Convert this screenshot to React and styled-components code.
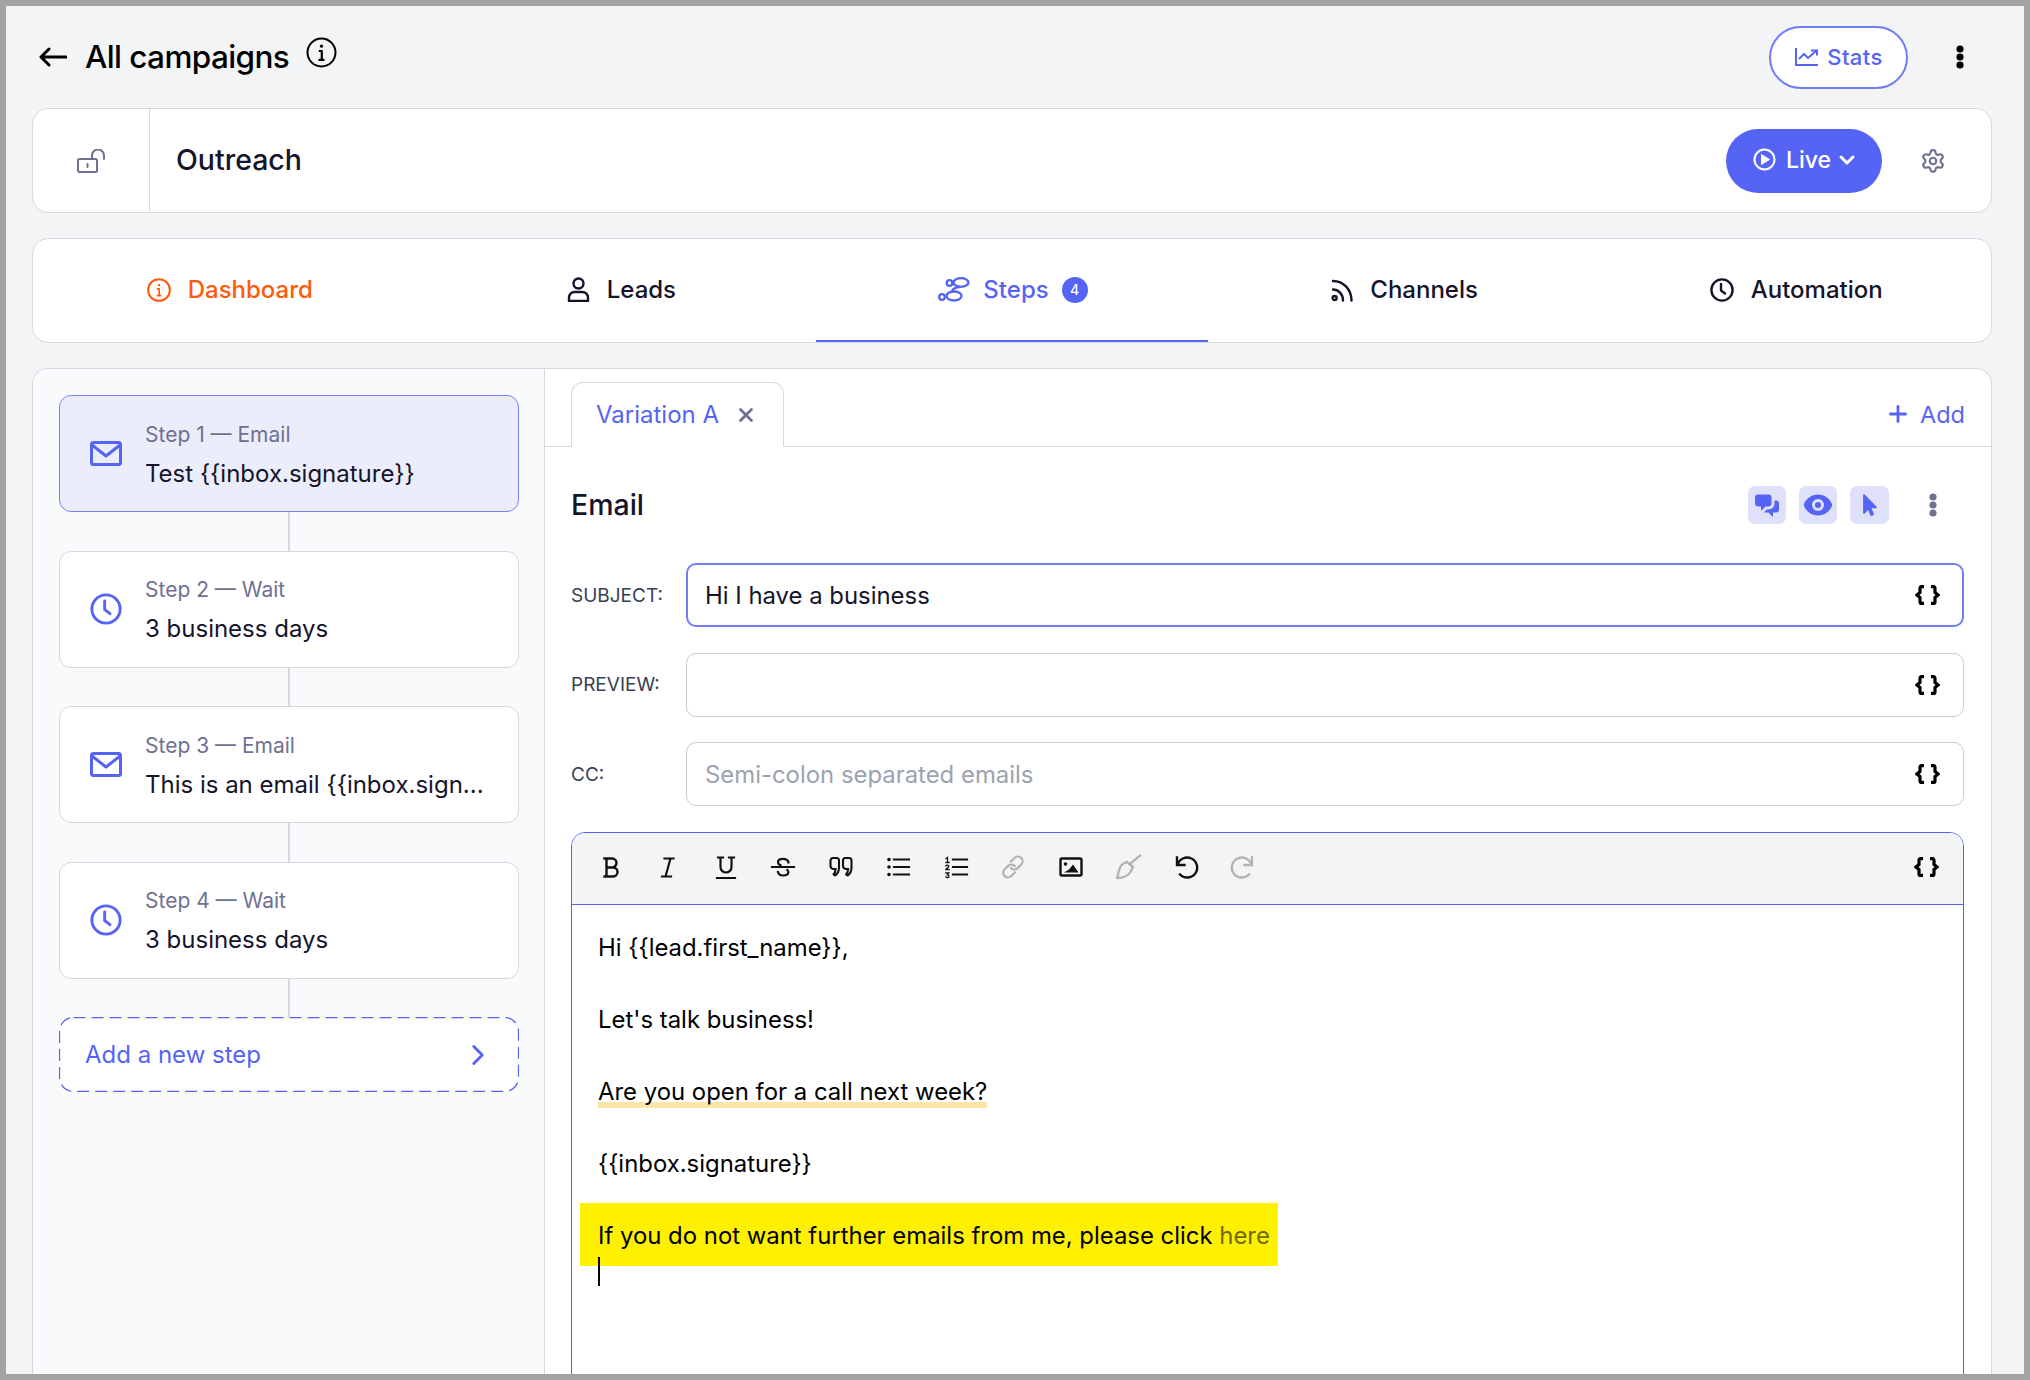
import React from "react";
import styled, { createGlobalStyle } from "styled-components";
import { Settings, ChevronDown, ChevronRight, X, Plus } from "lucide-react";
import { HiChatAlt2, HiEye } from "react-icons/hi";
import { FaMousePointer } from "react-icons/fa";

const PRIMARY = "#5664f5";
const EDGE = "#717df7";
const INK = "#14142b";
const MUTED = "#6e7191";
const LINE = "#d6d8e0";

const Global = createGlobalStyle`
  html, body { margin: 0; padding: 0; height: 1380px; overflow: hidden; background: #a3a3a3; }
  body { font-family: Inter, "Liberation Sans", sans-serif; }
  * { box-sizing: border-box; }
`;

const Frame = styled.div`
  margin: 6px;
  height: 1368px;
  background: #f3f4f6;
  overflow: hidden;
  padding: 0 32px 0 26px;
  display: flex;
  flex-direction: column;
`;
const Header = styled.header`
  height: 102px;
  flex: none;
  display: flex;
  align-items: center;
`;
const BackLink = styled.a`
  display: flex;
  align-items: center;
  color: #000;
  font-size: 31.5px;
  font-weight: 500;
  letter-spacing: -0.6px;
  gap: 18px;
  margin-left: 7px;
  padding-bottom: 1px;
`;
const InfoWrap = styled.span`
  display: flex;
  margin-left: 17px;
  margin-top: -9px;
`;
const HeaderRight = styled.div`
  margin-left: auto;
  display: flex;
  align-items: center;
  gap: 48px;
  margin-right: 28px;
`;
const StatsButton = styled.button`
  width: 139px;
  height: 63px;
  border-radius: 32px;
  border: 2px solid ${EDGE};
  background: #fff;
  color: ${PRIMARY};
  font: 500 22px Inter, sans-serif;
  letter-spacing: 0.4px;
  display: flex;
  align-items: center;
  justify-content: center;
  gap: 9px;
  padding: 0 0 0 1px;
`;
const Card = styled.section`
  background: #fff;
  border: 1px solid ${LINE};
  border-radius: 16px;
  flex: none;
`;
const NameCard = styled(Card)`
  height: 105px;
  display: flex;
  align-items: center;
`;
const LockCell = styled.div`
  width: 117px;
  height: 100%;
  border-right: 1px solid ${LINE};
  display: flex;
  align-items: center;
  justify-content: center;
`;
const CampaignName = styled.h1`
  margin: 0 0 0 26px;
  padding-bottom: 2px;
  font-size: 28.5px;
  font-weight: 500;
  color: ${INK};
`;
const LiveButton = styled.button`
  margin-left: auto;
  width: 156px;
  height: 64px;
  border-radius: 32px;
  border: 0;
  background: ${PRIMARY};
  color: #fff;
  font: 500 23px Inter, sans-serif;
  display: flex;
  align-items: center;
  justify-content: center;
  gap: 10px;
  padding: 0 0 2px;
`;
const LiveChevron = styled(ChevronDown)`
  margin: 0 -4px 0 -6px;
`;
const GearWrap = styled.span`
  display: flex;
  margin: 0 45px 0 38px;
  color: ${MUTED};
`;
const TabsCard = styled(Card)`
  height: 105px;
  margin-top: 25px;
  display: grid;
  grid-template-columns: repeat(5, 1fr);
  overflow: hidden;
`;
const Tab = styled.div`
  display: flex;
  align-items: center;
  justify-content: center;
  gap: ${(p) => p.$gap || 17}px;
  font-size: 24px;
  font-weight: 500;
  padding: 0 0 2px 2px;
  color: ${(p) => p.$color || INK};
  box-shadow: ${(p) => (p.$active ? `inset 0 -2px 0 ${PRIMARY}` : "none")};
`;
const Badge = styled.span`
  width: 26px;
  height: 26px;
  border-radius: 50%;
  background: ${PRIMARY};
  color: #fff;
  font-size: 14px;
  font-weight: 500;
  display: flex;
  align-items: center;
  justify-content: center;
`;
const Panel = styled(Card)`
  flex: 1;
  margin-top: 25px;
  border-bottom: 0;
  border-radius: 16px 16px 0 0;
  display: grid;
  grid-template-columns: 512px 1fr;
  overflow: hidden;
`;
const Sidebar = styled.aside`
  background: #f9fafb;
  border-right: 1px solid ${LINE};
  padding: 26px 25px 0 26px;
  display: flex;
  flex-direction: column;
`;
const StepCard = styled.div`
  height: 117px;
  flex: none;
  display: flex;
  align-items: center;
  padding-left: 30px;
  gap: 23px;
  border-radius: 12px;
  border: 1px solid ${(p) => (p.$active ? "#7682f3" : LINE)};
  background: ${(p) => (p.$active ? "#ecedfb" : "#fff")};
  color: ${PRIMARY};
`;
const StepText = styled.div`
  display: flex;
  flex-direction: column;
  gap: 9px;
  min-width: 0;
  margin-top: 1px;
`;
const StepLabel = styled.span`
  font-size: 21px;
  line-height: 30px;
  color: ${MUTED};
`;
const StepTitle = styled.span`
  font-size: 24px;
  line-height: 30px;
  color: ${INK};
  white-space: nowrap;
`;
const Connector = styled.div`
  width: 2px;
  height: 38.6px;
  flex: none;
  background: ${LINE};
  align-self: center;
`;
const AddStep = styled.div`
  position: relative;
  height: 75px;
  flex: none;
  border-radius: 14px;
  background: #fff;
  display: flex;
  align-items: center;
  justify-content: space-between;
  padding: 0 24px 0 26px;
  color: ${PRIMARY};
  font-size: 24px;
`;
const DashedEdge = styled.svg`
  position: absolute;
  inset: 0;
  width: 100%;
  height: 100%;
  pointer-events: none;
`;
const Main = styled.main`
  display: flex;
  flex-direction: column;
  min-width: 0;
`;
const VariationBar = styled.div`
  height: 78px;
  flex: none;
  border-bottom: 1px solid ${LINE};
  display: flex;
  align-items: flex-end;
  padding: 0 26px;
`;
const VariationTab = styled.div`
  width: 213px;
  height: 65px;
  margin-bottom: -1px;
  background: #fff;
  border: 1px solid ${LINE};
  border-bottom-color: #fff;
  border-radius: 12px 12px 0 0;
  display: flex;
  align-items: center;
  padding: 0 0 0 24px;
  gap: 16px;
  color: ${PRIMARY};
  font-size: 24px;
`;
const CloseMark = styled.span`
  display: flex;
  color: ${MUTED};
`;
const AddVariation = styled.div`
  margin-left: auto;
  height: 64px;
  display: flex;
  align-items: center;
  gap: 9px;
  color: ${PRIMARY};
  font-size: 23.5px;
`;
const Content = styled.div`
  padding: 38px 27px 0 26px;
  display: flex;
  flex-direction: column;
`;
const EmailRow = styled.div`
  display: flex;
  align-items: center;
  height: 39px;
  margin-bottom: 39px;
`;
const EmailTitle = styled.h2`
  margin: 0;
  font-size: 28.5px;
  font-weight: 500;
  color: ${INK};
`;
const Tools = styled.div`
  margin-left: auto;
  display: flex;
  align-items: center;
  gap: 13px;
  margin-right: 27px;
`;
const ToolButton = styled.span`
  width: ${(p) => p.$w || 38}px;
  height: 38px;
  border-radius: 7px;
  background: #dfe1fb;
  color: ${PRIMARY};
  display: flex;
  align-items: center;
  justify-content: center;
`;
const DotsWrap = styled.span`
  display: flex;
  margin-left: 27px;
`;
const FieldRow = styled.div`
  display: flex;
  align-items: center;
  height: 64px;
  margin-bottom: 25.5px;
`;
const FieldLabel = styled.label`
  width: 115px;
  flex: none;
  font-size: 19px;
  color: #374151;
`;
const FieldBox = styled.div`
  flex: 1;
  height: 100%;
  border-radius: 10px;
  background: #fff;
  border: ${(p) => (p.$focus ? `2px solid ${EDGE}` : "1px solid #c9ccd6")};
  display: flex;
  align-items: center;
  padding: 0 ${(p) => (p.$focus ? 22 : 23)}px 0 ${(p) => (p.$focus ? 17 : 18)}px;
  font-size: 23.9px;
  color: ${(p) => (p.$placeholder ? "#9ca3af" : INK)};
`;
const BraceSlot = styled.span`
  margin-left: auto;
  display: flex;
`;
const Editor = styled.div`
  height: 700px;
  flex: none;
  border: 1px solid ${PRIMARY};
  border-radius: 14px 14px 0 0;
  overflow: hidden;
`;
const Toolbar = styled.div`
  height: 72px;
  background: #f3f4f6;
  border-bottom: 1px solid ${PRIMARY};
  display: flex;
  align-items: center;
  padding: 0 24px 2px 26.5px;
  gap: 33.5px;
`;
const ToolIcon = styled.span`
  width: 24px;
  height: 24px;
  display: flex;
  color: ${(p) => (p.$off ? "#b3b3b3" : "#111")};
`;
const EditorBody = styled.div`
  padding: 25px 26px;
  font-size: 23.9px;
  line-height: 36.1px;
  color: #000;
`;
const Line = styled.div`
  min-height: 36.1px;
`;
const MarkedText = styled.span`
  background: linear-gradient(#fde5a8, #fde5a8) no-repeat 0 100% / 100% 6px;
  padding-bottom: 2px;
`;
const Footer = styled.span`
  background: #fff000;
  padding: 18px 8px 16px 18px;
  margin-left: -18px;
`;
const FooterLink = styled.span`
  color: #6d6a00;
`;
const Caret = styled.span`
  display: inline-block;
  width: 2px;
  height: 29px;
  background: #000;
  vertical-align: middle;
  margin-bottom: 5px;
`;

const Stroke = ({ size = 24, h, sw = 2, children, vb, ...rest }) => (
  <svg width={size} height={h || size} viewBox={vb || `0 0 ${size} ${h || size}`} fill="none" stroke="currentColor" strokeWidth={sw} strokeLinecap="round" strokeLinejoin="round" {...rest}>
    {children}
  </svg>
);

const IconBack = () => (
  <Stroke size={28} h={22} sw={3} style={{ color: "#000" }}>
    <path d="M10 3 2 11l8 8M2.5 11H27" />
  </Stroke>
);
const IconInfo = ({ size = 31, sw = 2 }) => (
  <Stroke size={31} sw={sw} vb="0 0 31 31" style={{ width: size, height: size }}>
    <circle cx="15.5" cy="15.5" r="14" />
    <circle cx="15.5" cy="9.2" r="1.6" fill="currentColor" stroke="none" />
    <path d="M12.8 14h3v8.5M12.5 22.8h6" strokeWidth="2.2" strokeLinecap="butt" />
  </Stroke>
);
const IconStats = () => (
  <svg width="23" height="18" viewBox="0 0 23 18" fill="none" stroke="currentColor" strokeWidth="2">
    <path d="M1 0v17h22" />
    <path d="M4 11l5-5 4 4 8-7" />
    <path d="M16 2.5h6v5" />
  </svg>
);
const IconDots = ({ color = "#000" }) => (
  <svg width="8" height="24" viewBox="0 0 8 24" fill={color}>
    <circle cx="4" cy="4" r="3.6" />
    <circle cx="4" cy="12" r="3.6" />
    <circle cx="4" cy="20" r="3.6" />
  </svg>
);
const IconLock = () => (
  <svg width="29" height="24" viewBox="0 0 29 24" fill="none" stroke={MUTED} strokeWidth="2">
    <rect x="1" y="10" width="19" height="13" rx="1.5" />
    <path d="M10.5 15v3" strokeLinecap="round" />
    <path d="M15 10V6.5a5.7 5.7 0 0 1 12 0V10" strokeLinecap="round" />
  </svg>
);
const IconPlay = () => (
  <svg width="23" height="23" viewBox="0 0 23 23" fill="none" stroke="#fff" strokeWidth="2">
    <circle cx="11.5" cy="11.5" r="10" />
    <path d="M8.5 6.5l8 5-8 5z" fill="#fff" stroke="#fff" strokeWidth="1" strokeLinejoin="round" />
  </svg>
);
const IconUser = () => (
  <Stroke size={23} h={25} sw={2.4}>
    <circle cx="11.5" cy="6.5" r="5" />
    <path d="M2 24v-3.5A5.5 5.5 0 0 1 7.5 15h8a5.5 5.5 0 0 1 5.5 5.5V24z" />
  </Stroke>
);
const IconSteps = () => (
  <Stroke size={32} h={25} sw={2.3}>
    <ellipse cx="23" cy="5.5" rx="7.5" ry="4.3" />
    <circle cx="11.5" cy="6" r="2.8" />
    <ellipse cx="16" cy="19" rx="7.5" ry="4.5" />
    <circle cx="4" cy="20" r="2.8" />
    <path d="M21 10c-3 .5-7 1.5-6.5 4.5" />
  </Stroke>
);
const IconRss = () => (
  <svg width="22" height="24" viewBox="0 0 22 24" fill="none" stroke={INK} strokeWidth="2.4" strokeLinecap="round">
    <circle cx="3.6" cy="20" r="2" />
    <path d="M2 11.5c5.5 0 10 4.5 10 11" />
    <path d="M2 3c10.5 0 18.5 8.5 18.5 19.5" />
  </svg>
);
const IconClock = ({ size = 24, sw = 2.4 }) => (
  <svg width={size} height={size} viewBox="0 0 24 24" fill="none" stroke="currentColor" strokeWidth={sw} strokeLinecap="round" strokeLinejoin="round">
    <circle cx="12" cy="12" r="10.6" />
    <path d="M11 6v6.5l4 3" />
  </svg>
);
const IconMail = () => (
  <svg width="32" height="25" viewBox="0 0 32 25" fill="none" stroke="currentColor" strokeWidth="3" strokeLinejoin="round">
    <rect x="1.5" y="1.5" width="29" height="22" rx="2" />
    <path d="M2 4l14 11L30 4" />
  </svg>
);
const IconBraces = () => (
  <svg width="25" height="20" viewBox="0 0 25 20" fill="none" stroke="#000" strokeWidth="3.2">
    <path d="M9 1.6H6.5A1.5 1.5 0 0 0 5 3.1V7.5L2 10l3 2.5v4.4a1.5 1.5 0 0 0 1.5 1.5H9" />
    <path d="M16 1.6h2.5A1.5 1.5 0 0 1 20 3.1V7.5L23 10l-3 2.5v4.4a1.5 1.5 0 0 1-1.5 1.5H16" />
  </svg>
);

const glyph = {
  bold: <path d="M5.5 3.5h7.5a4.5 4.5 0 0 1 0 9H7.5M7.5 12.5h6.5a4.5 4.5 0 0 1 0 9H5.5M7.5 3.5v18" strokeWidth="2.4" />,
  italic: <path d="M8.5 3.5h9M6 21.5h9M14.5 3.5l-5 18" strokeWidth="2.2" />,
  underline: <path d="M4 2.5h5M15 2.5h5M6.5 2.5v9.5a5.5 5.5 0 0 0 11 0V2.5M3 23h18" strokeWidth="2.2" />,
  strike: <path d="M1 12h22M17.5 7.5C17 5 15 3.8 12 3.8 9 3.8 7 5 7 7c0 1.5 1 2.6 2.5 3.2M7 17c.6 2.3 2.5 3.5 5 3.5 3 0 5.3-1.2 5.3-3.3 0-1-.4-1.7-1-2.2" strokeWidth="2.2" />,
  quote: <path d="M4 3h3.500a2.500 2.500 0 0 1 2.500 2.500v7c0 4-1.500 6.500-4 8l-1.500-1.200c1.200-1 2-3 2.200-5.300H5c-2 0-3.500-1-3.500-3V5.500A2.500 2.500 0 0 1 4 3zM16.500 3H20a2.500 2.500 0 0 1 2.500 2.500v7c0 4-1.500 6.500-4 8L17 19.300c1.200-1 2-3 2.200-5.300h-1.700c-2 0-3.500-1-3.500-3V5.500A2.500 2.500 0 0 1 16.500 3z" strokeWidth="2.100" strokeLinejoin="round" />,
  bullets: (
    <>
      <path d="M8 4.5h15M8 12h15M8 19.5h15" strokeWidth="2.2" />
      <circle cx="3" cy="4.5" r="1.8" fill="currentColor" stroke="none" />
      <circle cx="3" cy="12" r="1.8" fill="currentColor" stroke="none" />
      <circle cx="3" cy="19.5" r="1.8" fill="currentColor" stroke="none" />
    </>
  ),
  ordered: (
    <>
      <path d="M9 4.5h14M9 12h14M9 19.5h14" strokeWidth="2.2" />
      <path d="M2 3.5l1.5-1v5M2 7.5h3" strokeWidth="1.3" />
      <path d="M1.8 11c.6-1.2 3-1 3 .3 0 1.2-2.8 2-3 3.2h3.2" strokeWidth="1.3" />
      <path d="M2 18h2.8l-1.3 1.8c1.4 0 1.5 1.2 1.5 1.7 0 1-2 1.5-3 .5" strokeWidth="1.3" />
    </>
  ),
  link: <path d="M10 6.5l3.5-3.5a4.6 4.6 0 0 1 6.8 6.5l-3.6 3.6a4.6 4.6 0 0 1-6.5 0M13.8 17.5l-3.5 3.5a4.6 4.6 0 0 1-6.8-6.5l3.6-3.6a4.6 4.6 0 0 1 6.5 0" strokeWidth="2.2" />,
  image: (
    <>
      <rect x="1.5" y="3.5" width="21" height="17" rx="1.5" strokeWidth="2.4" />
      <circle cx="6.5" cy="9" r="1.8" fill="currentColor" stroke="none" />
      <path d="M5 17.5l5-3 4-5 5.5 8z" fill="currentColor" stroke="none" />
    </>
  ),
  brush: <path d="M24 .5L15 8M11 7l6 5M11 7C7 8 4.5 10.5 3.5 14L1 23c5 0 11-2 13.5-6L17 12" strokeWidth="2.3" strokeLinejoin="round" />,
  undo: <path d="M3 2.5v7.5h7.5M3.5 10A10 10 0 1 1 6 19.5" strokeWidth="2.4" />,
  redo: <path d="M21 2.5v7.5h-7.5M20.5 10A10 10 0 1 0 18 19.5" strokeWidth="2.4" />,
};
const Tool = ({ name, off }) => (
  <ToolIcon $off={off}>
    <svg width="24" height="24" viewBox="0 0 24 24" fill="none" stroke="currentColor" strokeLinecap="square" strokeLinejoin="miter" style={{ overflow: "visible" }}>
      {glyph[name]}
    </svg>
  </ToolIcon>
);

const steps = [
  { kind: "mail", label: "Step 1 — Email", title: "Test {{inbox.signature}}", active: true },
  { kind: "clock", label: "Step 2 — Wait", title: "3 business days" },
  { kind: "mail", label: "Step 3 — Email", title: "This is an email {{inbox.sign..." },
  { kind: "clock", label: "Step 4 — Wait", title: "3 business days" },
];
const fields = [
  { label: "SUBJECT:", value: "Hi I have a business", focus: true },
  { label: "PREVIEW:", value: "" },
  { label: "CC:", value: "Semi-colon separated emails", placeholder: true },
];
const toolbar = [
  ["bold"], ["italic"], ["underline"], ["strike"], ["quote"], ["bullets"], ["ordered"],
  ["link", true], ["image"], ["brush", true], ["undo"], ["redo", true],
];

export default function App() {
  return (
    <>
      <Global />
      <Frame>
        <Header>
          <BackLink>
            <IconBack />
            All campaigns
          </BackLink>
          <InfoWrap>
            <IconInfo />
          </InfoWrap>
          <HeaderRight>
            <StatsButton>
              <IconStats />
              Stats
            </StatsButton>
            <IconDots />
          </HeaderRight>
        </Header>

        <NameCard>
          <LockCell>
            <IconLock />
          </LockCell>
          <CampaignName>Outreach</CampaignName>
          <LiveButton>
            <IconPlay />
            Live
            <LiveChevron size={24} strokeWidth={3} />
          </LiveButton>
          <GearWrap>
            <Settings size={26} strokeWidth={2} />
          </GearWrap>
        </NameCard>

        <TabsCard>
          <Tab $color="#ff5a0a">
            <IconInfo size={24} sw={2.6} />
            Dashboard
          </Tab>
          <Tab>
            <IconUser />
            Leads
          </Tab>
          <Tab $color={PRIMARY} $active $gap={13}>
            <IconSteps />
            Steps
            <Badge>4</Badge>
          </Tab>
          <Tab>
            <IconRss />
            Channels
          </Tab>
          <Tab>
            <IconClock />
            Automation
          </Tab>
        </TabsCard>

        <Panel>
          <Sidebar>
            {steps.map((s) => (
              <React.Fragment key={s.label}>
                <StepCard $active={s.active}>
                  {s.kind === "mail" ? <IconMail /> : <IconClock size={32} sw={2.2} />}
                  <StepText>
                    <StepLabel>{s.label}</StepLabel>
                    <StepTitle>{s.title}</StepTitle>
                  </StepText>
                </StepCard>
                <Connector />
              </React.Fragment>
            ))}
            <AddStep>
              <DashedEdge>
                <rect x="0.5" y="0.5" width="459" height="74" rx="14" fill="none" stroke={PRIMARY} strokeWidth="1.3" strokeDasharray="12 6" />
              </DashedEdge>
              Add a new step
              <ChevronRight size={34} strokeWidth={2} />
            </AddStep>
          </Sidebar>

          <Main>
            <VariationBar>
              <VariationTab>
                Variation A
                <CloseMark>
                  <X size={22} strokeWidth={3} />
                </CloseMark>
              </VariationTab>
              <AddVariation>
                <Plus size={26} strokeWidth={2.6} />
                Add
              </AddVariation>
            </VariationBar>
            <Content>
              <EmailRow>
                <EmailTitle>Email</EmailTitle>
                <Tools>
                  <ToolButton>
                    <HiChatAlt2 size={30} />
                  </ToolButton>
                  <ToolButton>
                    <HiEye size={30} />
                  </ToolButton>
                  <ToolButton $w={39}>
                    <FaMousePointer size={22} />
                  </ToolButton>
                  <DotsWrap>
                    <IconDots color={MUTED} />
                  </DotsWrap>
                </Tools>
              </EmailRow>
              {fields.map((f) => (
                <FieldRow key={f.label}>
                  <FieldLabel>{f.label}</FieldLabel>
                  <FieldBox $focus={f.focus} $placeholder={f.placeholder}>
                    {f.value}
                    <BraceSlot>
                      <IconBraces />
                    </BraceSlot>
                  </FieldBox>
                </FieldRow>
              ))}
              <Editor>
                <Toolbar>
                  {toolbar.map(([n, off]) => (
                    <Tool key={n} name={n} off={off} />
                  ))}
                  <BraceSlot>
                    <IconBraces />
                  </BraceSlot>
                </Toolbar>
                <EditorBody>
                  <Line>Hi {"{{lead.first_name}}"},</Line>
                  <Line />
                  <Line>Let's talk business!</Line>
                  <Line />
                  <Line>
                    <MarkedText>Are you open for a call next week?</MarkedText>
                  </Line>
                  <Line />
                  <Line>{"{{inbox.signature}}"}</Line>
                  <Line />
                  <Line>
                    <Footer>
                      If you do not want further emails from me, please click <FooterLink>here</FooterLink>
                    </Footer>
                  </Line>
                  <Line>
                    <Caret />
                  </Line>
                </EditorBody>
              </Editor>
            </Content>
          </Main>
        </Panel>
      </Frame>
    </>
  );
}
